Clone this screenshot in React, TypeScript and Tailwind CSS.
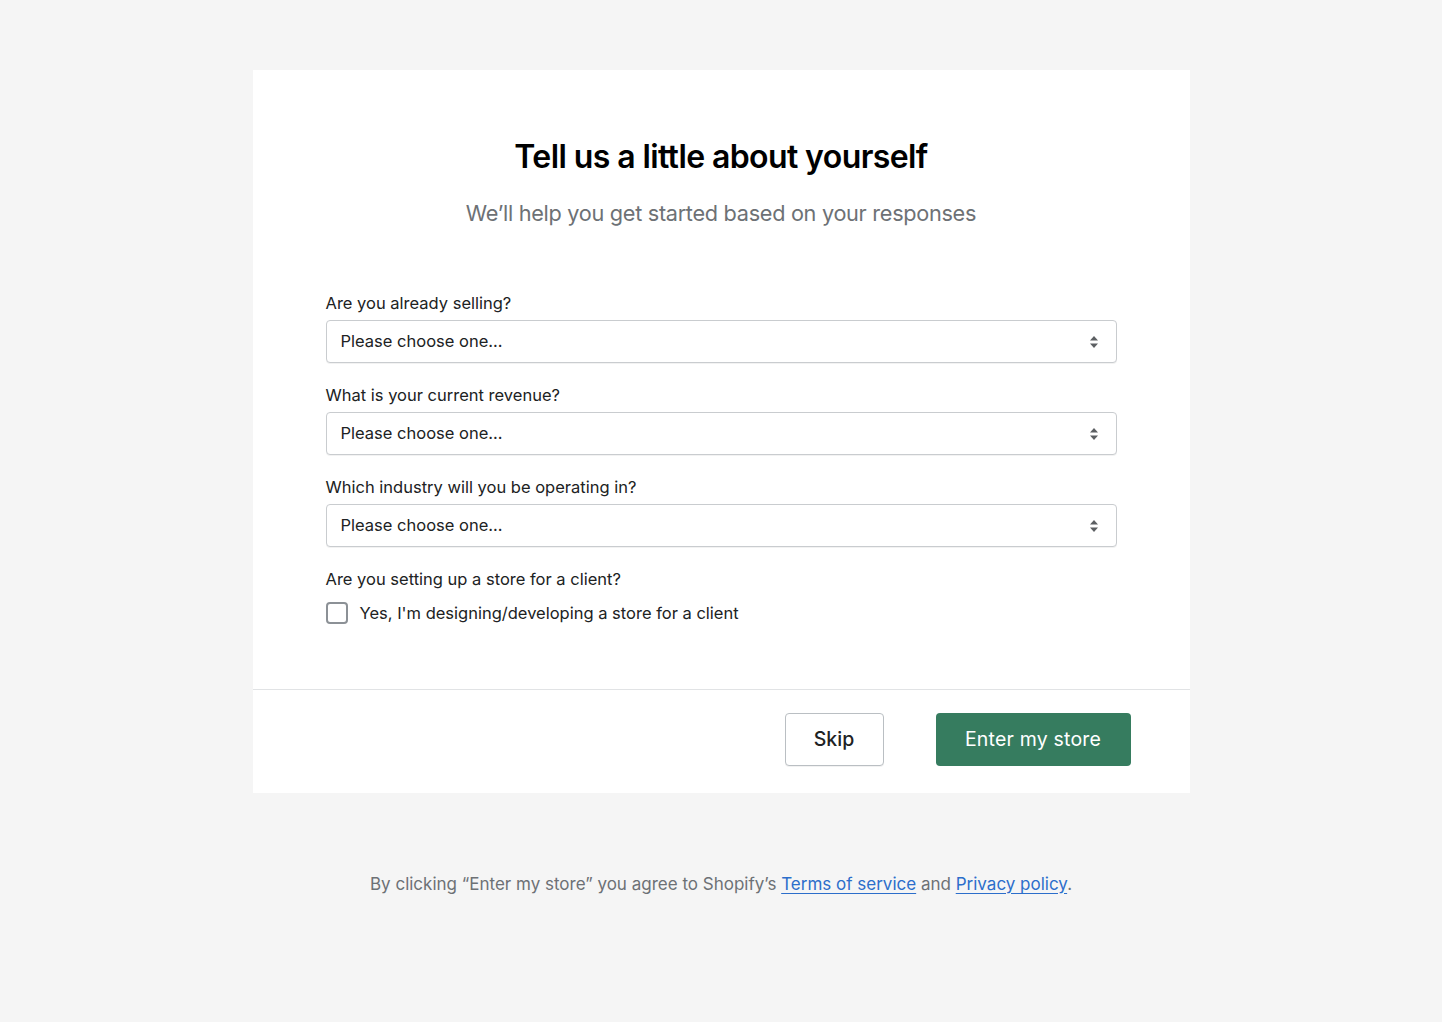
import React from "react";

function Chevrons() {
  return (
    <svg width="12" height="16" viewBox="0 0 12 16" className="text-[#5c5f62]">
      <path d="M6 2 L10 6.5 H2 Z" fill="currentColor" />
      <path d="M6 14 L10 9.5 H2 Z" fill="currentColor" />
    </svg>
  );
}

function SelectField({ label }: { label: string }) {
  return (
    <div className="flex flex-col">
      <label className="text-[16.5px] leading-[24px] text-[#202223] mb-[5px]">{label}</label>
      <div className="h-[43px] flex items-center justify-between rounded-[4px] border border-[#c9cccf] bg-white pl-[14px] pr-[16px] shadow-[0_1px_0_rgba(0,0,0,0.05)]">
        <span className="text-[16.5px] text-[#202223]">Please choose one...</span>
        <Chevrons />
      </div>
    </div>
  );
}

export default function App() {
  return (
    <div
      className="min-h-[1022px] w-full bg-[#f5f5f5] flex flex-col items-center pt-[70px]"
      style={{ fontFamily: "Inter, 'Noto Sans', sans-serif" }}
    >
      <div className="w-[937px] bg-white">
        <div className="px-[73px] pt-[66px] pb-[64px]">
          <h1 className="text-center text-[32px] leading-[42px] font-semibold tracking-[-0.6px] text-[#000]">
            Tell us a little about yourself
          </h1>
          <p className="text-center text-[21.7px] leading-[30px] text-[#6d7175] mt-[20px] tracking-[-0.3px]">
            We’ll help you get started based on your responses
          </p>
          <div className="mt-[63px] flex flex-col gap-[20px] w-[791px]">
            <SelectField label="Are you already selling?" />
            <SelectField label="What is your current revenue?" />
            <SelectField label="Which industry will you be operating in?" />
            <div className="flex flex-col">
              <span className="text-[16.5px] leading-[24px] text-[#202223]">
                Are you setting up a store for a client?
              </span>
              <label className="flex items-center gap-[12px] mt-[10px]">
                <span className="w-[22px] h-[22px] rounded-[4px] border-2 border-[#8c9196] bg-white" />
                <span className="text-[16.5px] leading-[24px] text-[#202223]">
                  Yes, I'm designing/developing a store for a client
                </span>
              </label>
            </div>
          </div>
        </div>
        <div className="border-t border-[#e1e3e5] flex justify-end gap-[52px] pr-[59px] pt-[23px] pb-[27px]">
          <button className="w-[99px] h-[53px] rounded-[4px] border border-[#babfc3] bg-white text-[19.5px] font-medium text-[#202223] shadow-[0_1px_0_rgba(0,0,0,0.05)]">
            Skip
          </button>
          <button className="w-[195px] h-[53px] rounded-[4px] bg-[#367c5f] text-[19.5px] text-white tracking-[0.2px]">
            Enter my store
          </button>
        </div>
      </div>
      <p className="mt-[79px] text-[17px] text-[#6d7175] leading-[24px]">
        By clicking “Enter my store” you agree to Shopify’s{" "}
        <a className="text-[#2c6ecb] underline underline-offset-[3px] decoration-[#2c6ecb]">Terms of service</a>{" "}
        and{" "}
        <a className="text-[#2c6ecb] underline underline-offset-[3px] decoration-[#2c6ecb]">Privacy policy</a>.
      </p>
    </div>
  );
}
